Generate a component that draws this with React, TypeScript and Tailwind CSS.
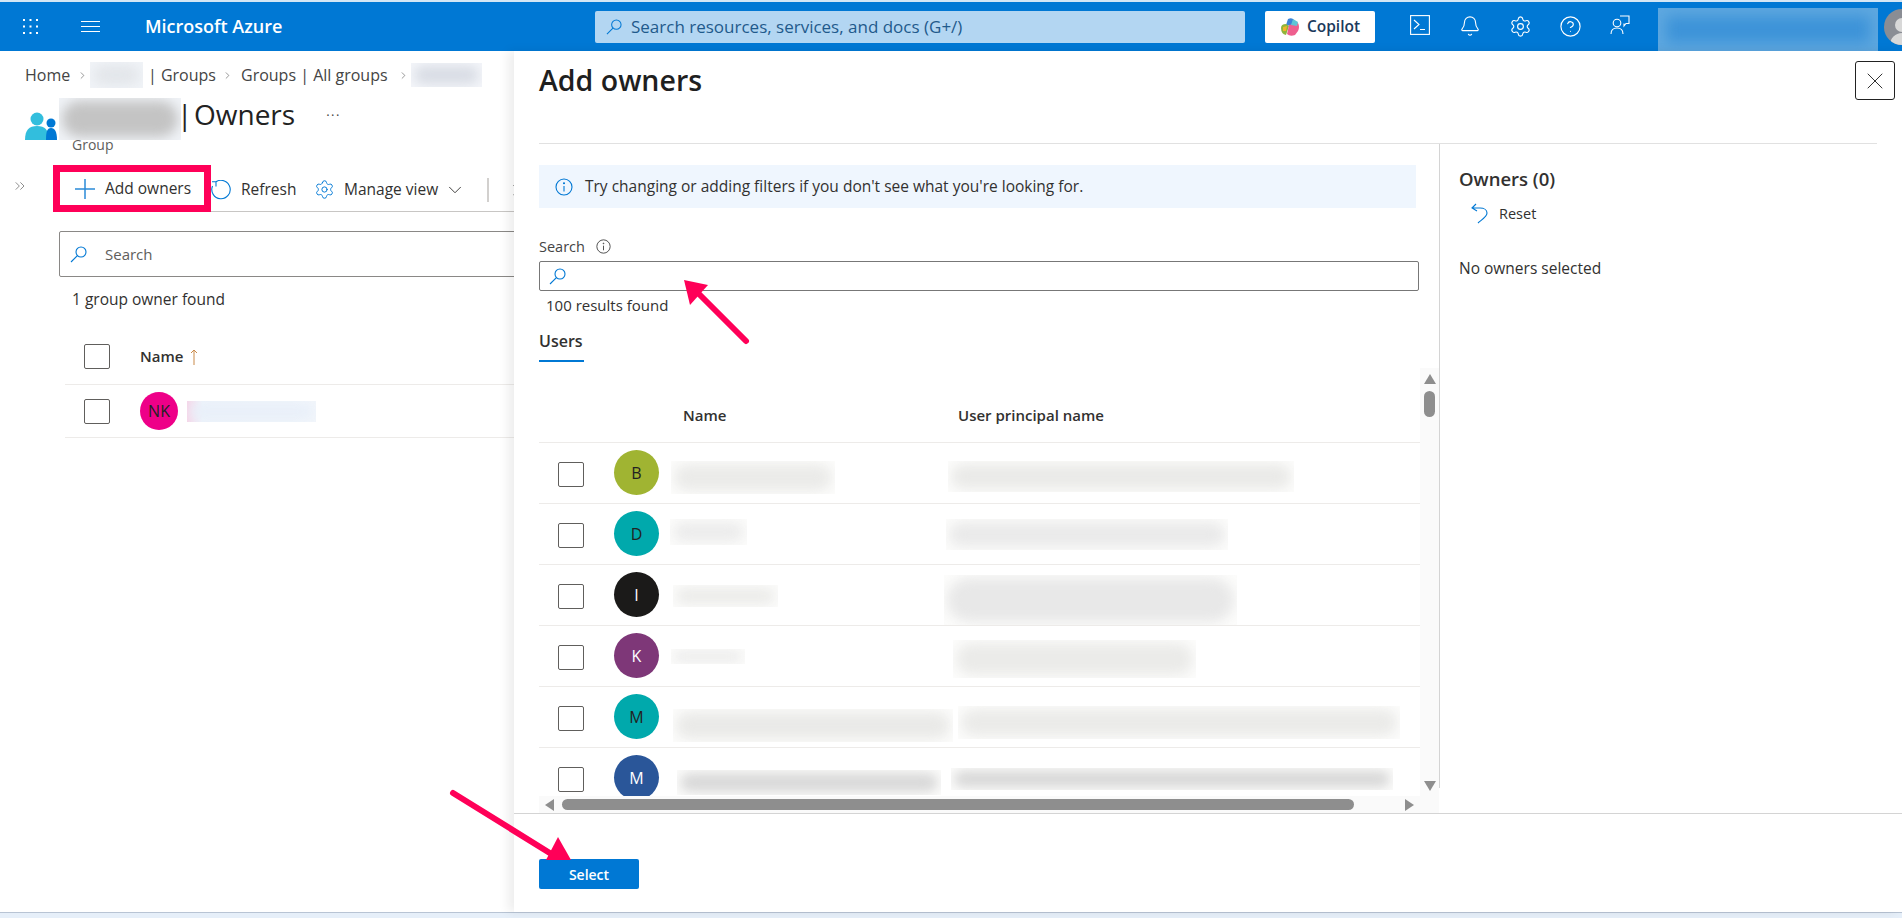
import { Bell, ChevronDown, ChevronRight, ChevronsRight, CircleHelp, Settings, X } from "lucide-react";

const font = "font-['Open_Sans',sans-serif]";

interface UserRow {
    letter: string;
    avatar: string;
    name: string;
    upn: string;
    nameInner: string;
    upnInner: string;
}

const rows: UserRow[] = [
    { letter: "B", avatar: "bg-[#a0b432] text-[#222]", name: "ml-[2px] mt-[18px] h-[33px] w-[164px]", upn: "ml-[4px] mt-[18px] h-[31px] w-[346px]", nameInner: "bg-[#ebebe9]", upnInner: "bg-[#eaeae8]" },
    { letter: "D", avatar: "bg-[#00a9ac] text-[#222]", name: "ml-[1px] mt-[15px] h-[26px] w-[77px]", upn: "ml-[2px] mt-[15px] h-[31px] w-[282px]", nameInner: "bg-[#ececec]", upnInner: "bg-[#eaeaea]" },
    { letter: "I", avatar: "bg-[#1b1a19] text-white", name: "ml-[4px] mt-[20px] h-[22px] w-[105px]", upn: "mt-[10px] h-[50px] w-[293px]", nameInner: "bg-[#ebebe9]", upnInner: "bg-[#e8e8e8]" },
    { letter: "K", avatar: "bg-[#7e3778] text-white", name: "ml-[2px] mt-[23px] h-[15px] w-[74px]", upn: "ml-[9px] mt-[14px] h-[38px] w-[243px]", nameInner: "bg-[#e8e8e8]", upnInner: "bg-[#ebebe9]" },
    { letter: "M", avatar: "bg-[#00a9ac] text-[#222]", name: "ml-[4px] mt-[22px] h-[33px] w-[280px]", upn: "ml-[14px] mt-[19px] h-[33px] w-[442px]", nameInner: "bg-[#eaeae8]", upnInner: "bg-[#ebebe9]" },
    { letter: "M", avatar: "bg-[#2a5699] text-white", name: "ml-[8px] mt-[22px] h-[25px] w-[264px]", upn: "ml-[7px] mt-[20px] h-[22px] w-[442px]", nameInner: "bg-[#d8d8d8]", upnInner: "bg-[#d6d6d6]" },
];

function Blur({ className, inner, bg = "bg-[#fcfcfb]" }: { className: string; inner: string; bg?: string }) {
    return (
        <div className={`overflow-hidden shrink-0 ${bg} ${className}`}>
            <div className="h-full w-full p-[3px]">
                <div className={`h-full w-full rounded-full blur-[6px] ${inner}`} />
            </div>
        </div>
    );
}

function Checkbox() {
    return <div className="w-[26px] h-[25px] rounded-[2px] border border-[#605e5c] bg-white shrink-0" />;
}

function Magnifier({ className }: { className: string }) {
    return (
        <svg viewBox="0 0 17 17" fill="none" stroke="#0078d4" strokeWidth="1.1" className={className}>
            <circle cx="11" cy="6" r="5" />
            <path d="M7.4 9.6 1 16" />
        </svg>
    );
}

function InfoIcon({ className, color }: { className: string; color: string }) {
    return (
        <svg viewBox="0 0 18 18" fill="none" stroke={color} strokeWidth="1.1" className={className}>
            <circle cx="9" cy="9" r="8" />
            <path d="M9 8v5.5" />
            <circle cx="9" cy="5.3" r="0.5" fill={color} />
        </svg>
    );
}

function TopBar() {
    return (
        <div className="h-[51px] bg-[#0078d4] border-t-2 border-[#d3e6f5] flex items-center shrink-0">
            <svg viewBox="0 0 15 15" fill="#fff" className="ml-[23px] w-[15px] h-[15px] shrink-0">
                <rect x="0" y="0" width="2" height="2" /><rect x="6.5" y="0" width="2" height="2" /><rect x="13" y="0" width="2" height="2" />
                <rect x="0" y="6.5" width="2" height="2" /><rect x="6.5" y="6.5" width="2" height="2" /><rect x="13" y="6.5" width="2" height="2" />
                <rect x="0" y="13" width="2" height="2" /><rect x="6.5" y="13" width="2" height="2" /><rect x="13" y="13" width="2" height="2" />
            </svg>
            <div className="ml-[43px] w-[19px] flex flex-col gap-[4px] shrink-0">
                <div className="h-[1px] bg-white" />
                <div className="h-[1px] bg-white" />
                <div className="h-[1px] bg-white" />
            </div>
            <div className="ml-[45px] w-[450px] text-white font-semibold text-[18px] shrink-0">Microsoft Azure</div>
            <div className="w-[650px] h-[32px] rounded-[2px] bg-[#b3d6f2] flex items-center pl-[11px] gap-[9px] text-[#1f5a8c] text-[17px] shrink-0">
                <Magnifier className="w-[16px] h-[16px]" />
                Search resources, services, and docs (G+/)
            </div>
            <div className="ml-[20px] w-[110px] h-[32px] rounded-[2px] bg-white flex items-center justify-center gap-[7px] text-[#1b3a5c] font-semibold text-[15.5px] shrink-0">
                <svg viewBox="0 0 20 20" className="w-[20px] h-[20px]">
                    <path d="M8 2 Q12 0 14 3 L11 9 L6 8 Z" fill="#3c83d8" />
                    <path d="M1 11 Q1 7 6 7 L9 9 L6 18 Q1 17 1 11 Z" fill="#8fb53c" />
                    <path d="M9 8 L18 6 Q20 10 18 14 L15 18 Q10 20 7 17 Z" fill="#ee5f8e" />
                    <path d="M13 2 L18 5 L17 9 L11 8 Z" fill="#5ec6d6" />
                    <path d="M3 10 L7 9 L6 14 L3 14 Z" fill="#f0b429" />
                </svg>
                Copilot
            </div>
            <div className="ml-[20px] flex text-white shrink-0">
                <div className="w-[50px] flex justify-center">
                    <svg viewBox="0 0 20 20" fill="none" stroke="#fff" strokeWidth="1.1" className="w-[20px] h-[20px]">
                        <rect x="0.6" y="0.6" width="18.8" height="18.8" />
                        <path d="M4 5 9 9.5 4 14M10 14.5h5" />
                    </svg>
                </div>
                <div className="w-[50px] flex justify-center"><Bell size={22} strokeWidth={1.2} /></div>
                <div className="w-[50px] flex justify-center"><Settings size={23} strokeWidth={1.2} /></div>
                <div className="w-[50px] flex justify-center"><CircleHelp size={23} strokeWidth={1.2} /></div>
                <div className="w-[50px] flex justify-center">
                    <svg viewBox="0 0 20 20" fill="none" stroke="#fff" strokeWidth="1.1" className="w-[20px] h-[20px]">
                        <circle cx="7" cy="8" r="3.8" />
                        <path d="M1 19c0-4 2.5-6 6-6s6 2 6 6M10 1h9v7.5h-3l-2 2.5V8.5" />
                    </svg>
                </div>
            </div>
            <div className="ml-[13px] w-[220px] h-[43px] mt-[6px] bg-[#5ea8e0] overflow-hidden shrink-0">
                <div className="h-full w-full p-[8px]">
                    <div className="h-full w-full blur-[7px] bg-[#3d93d8]" />
                </div>
            </div>
            <div className="w-[36px] h-[36px] ml-[6px] rounded-full bg-[#8a8d94] flex flex-col items-center justify-end overflow-hidden shrink-0">
                <div className="w-[14px] h-[14px] rounded-full bg-[#d8d8d8] mb-[1px]" />
                <div className="w-[24px] h-[12px] rounded-t-full bg-[#d8d8d8]" />
            </div>
        </div>
    );
}

function Blade() {
    return (
        <div className="h-full overflow-hidden text-[#323130]">
            <div className="mt-[11px] h-[26px] pl-[25px] flex items-center text-[16px] text-[#444] w-[520px] whitespace-nowrap">
                <span className="w-[47px]">Home</span>
                <ChevronRight size={11} strokeWidth={1.2} className="ml-[5px] shrink-0" />
                <Blur className="ml-[2px] w-[53px] h-[26px]" bg="bg-[#f1f4f8]" inner="bg-[#e3e6ea]" />
                <span className="ml-[5px] w-[65px]">| Groups</span>
                <ChevronRight size={11} strokeWidth={1.2} className="ml-[9px] shrink-0" />
                <span className="ml-[8px] w-[148px]">Groups | All groups</span>
                <ChevronRight size={11} strokeWidth={1.2} className="ml-[9px] shrink-0" />
                <Blur className="ml-[2px] w-[71px] h-[24px]" bg="bg-[#f4f6fa]" inner="bg-[#d8dce4]" />
            </div>
            <div className="mt-[10px] h-[37px] flex items-start">
                <svg viewBox="0 0 33 28" className="ml-[25px] mt-[14px] w-[33px] h-[28px] shrink-0">
                    <circle cx="12" cy="7" r="6.5" fill="#32bedd" />
                    <path d="M0 28c0-10 4-14 12-14s12 4 12 14Z" fill="#32bedd" />
                    <circle cx="26" cy="11" r="4.5" fill="#0078d4" />
                    <path d="M21 28c0-8 1-12 5-12s6 4 6 12Z" fill="#0078d4" />
                </svg>
                <Blur className="ml-[1px] w-[122px] h-[42px]" bg="bg-[#f0f3f7]" inner="bg-[#c4c4c4]" />
                <span className="-ml-[4px] -mt-[2px] w-[17px] text-[28px] leading-[36px] text-[#222]">|</span>
                <span className="-mt-[2px] text-[28px] leading-[36px] text-[#222]">Owners</span>
                <span className="ml-[31px] mt-[10px] text-[13px] leading-[14px] tracking-[1.5px] text-[#444]">···</span>
            </div>
            <div className="h-[20px] pl-[72px] pt-[1px] text-[14px] leading-[18px] text-[#605e5c]">Group</div>
            <div className="mt-[10px] flex">
                <ChevronsRight size={16} strokeWidth={1} className="ml-[12px] mt-[13px] -mr-[1px] text-[#555] shrink-0" />
                <div className="ml-[38px] w-[700px] h-[47px] border-b border-[#c8c6c4] flex items-center text-[15.5px]">
                    <div className="-ml-[12px] w-[158px] h-[47px] border-[7px] border-[#ff0058] bg-white flex items-center pl-[15px] pt-[2px] gap-[10px] shrink-0">
                        <svg viewBox="0 0 20 20" stroke="#2b8bd8" strokeWidth="1.5" className="w-[20px] h-[20px] shrink-0">
                            <path d="M10 0v20M0 10h20" />
                        </svg>
                        <span className="whitespace-nowrap">Add owners</span>
                    </div>
                    <div className="flex items-center mt-[3px]">
                        <svg viewBox="0 0 20 20" fill="none" stroke="#0078d4" strokeWidth="1.1" className="w-[20px] h-[20px] shrink-0">
                            <path d="M5 1.8A9.2 9.2 0 1 1 1.5 6M5 1.8V6.5M5 1.8H1" />
                        </svg>
                        <span className="ml-[10px] w-[53px]">Refresh</span>
                        <Settings size={21} strokeWidth={1.1} className="ml-[20px] text-[#0078d4] shrink-0" />
                        <span className="ml-[9px] w-[94px] whitespace-nowrap">Manage view</span>
                        <ChevronDown size={22} strokeWidth={1} className="ml-[6px] shrink-0" />
                        <div className="ml-[21px] w-[2px] h-[24px] bg-[#d2d0ce] shrink-0" />
                        <ChevronRight size={18} strokeWidth={1} className="ml-[18px] shrink-0" />
                    </div>
                </div>
            </div>
            <div className="ml-[59px] mt-[19px] w-[700px] h-[46px] rounded-[2px] border border-[#8a8886] flex items-center pl-[10px] text-[15px] text-[#605e5c]">
                <Magnifier className="w-[17px] h-[17px]" />
                <span className="ml-[18px]">Search</span>
            </div>
            <div className="ml-[72px] mt-[11px] h-[22px] leading-[22px] text-[15.5px]">1 group owner found</div>
            <div className="ml-[65px] mt-[16px] w-[700px] h-[59px] border-b border-[#edebe9] flex items-start">
                <div className="ml-[19px] mt-[18px]"><Checkbox /></div>
                <span className="ml-[30px] mt-[18px] font-semibold text-[15px] leading-[24px]">Name</span>
                <svg viewBox="0 0 8 16" fill="none" stroke="#c98a4a" strokeWidth="1" className="ml-[7px] mt-[23px] w-[8px] h-[16px]">
                    <path d="M4 16V1M1 4l3-3 3 3" />
                </svg>
            </div>
            <div className="ml-[65px] w-[700px] h-[53px] border-b border-[#edebe9] flex items-center">
                <div className="ml-[19px]"><Checkbox /></div>
                <div className="ml-[30px] w-[38px] h-[38px] rounded-full bg-[#ee0088] text-[#222] text-[16px] font-medium flex items-center justify-center shrink-0">NK</div>
                <Blur className="ml-[9px] w-[129px] h-[21px]" bg="bg-[linear-gradient(90deg,#f6d5e8,#eef4fb_12%,#f2f6fb)]" inner="bg-[#e8eff9]" />
            </div>
        </div>
    );
}

function OwnersTable() {
    return (
        <div className="h-[428px] overflow-hidden flex">
            <div className="w-[881px] shrink-0">
                <div className="h-[75px] border-b border-[#edebe9] flex items-start text-[15px] font-semibold text-[#323130]">
                    <span className="ml-[144px] mt-[36px] w-[275px]">Name</span>
                    <span className="mt-[36px]">User principal name</span>
                </div>
                {rows.map((row, i) => (
                    <div key={i} className="h-[61px] border-b border-[#edebe9] flex items-start">
                        <div className="ml-[19px] mt-[19px]"><Checkbox /></div>
                        <div className={`ml-[30px] mt-[7px] w-[45px] h-[45px] rounded-full flex items-center justify-center text-[16px] shrink-0 ${row.avatar}`}>
                            {row.letter}
                        </div>
                        <div className="ml-[10px] w-[275px] shrink-0">
                            <Blur className={row.name} inner={row.nameInner} />
                        </div>
                        <div className="shrink-0">
                            <Blur className={row.upn} inner={row.upnInner} />
                        </div>
                    </div>
                ))}
            </div>
            <div className="w-[19px] h-[428px] bg-[#fafafa] flex flex-col items-center shrink-0">
                <svg viewBox="0 0 12 10" fill="#8e8e8e" className="mt-[6px] w-[12px] h-[10px]"><path d="M6 0 12 10H0Z" /></svg>
                <div className="mt-[7px] w-[11px] h-[26px] rounded-full bg-[#8e8e8e]" />
                <div className="flex-1" />
                <svg viewBox="0 0 12 10" fill="#8e8e8e" className="mb-[5px] w-[12px] h-[10px]"><path d="M0 0H12L6 10Z" /></svg>
            </div>
        </div>
    );
}

function AddOwnersPanel() {
    return (
        <div className="absolute left-[514px] right-0 top-0 bottom-0 bg-white shadow-[-6px_0_10px_rgba(0,0,0,0.07)] flex flex-col text-[#323130]">
            <div className="h-[93px] ml-[25px] mr-[25px] border-b border-[#e1e1e1] relative shrink-0">
                <div className="pt-[10px] text-[28.5px] leading-[38px] font-semibold text-[#1f1f1f]">Add owners</div>
                <div className="absolute -right-[18px] top-[10px] w-[40px] h-[39px] rounded-[3px] border border-[#222] bg-white flex items-center justify-center">
                    <X size={28} strokeWidth={0.8} className="text-[#222]" />
                </div>
            </div>
            <div className="h-[670px] flex shrink-0 border-b border-[#d4d4d4]">
                <div className="ml-[25px] w-[900px] shrink-0">
                    <div className="mt-[21px] w-[877px] h-[43px] bg-[#eff6fe] flex items-center pl-[16px] pt-[1px] gap-[12px] text-[15.5px]">
                        <InfoIcon className="w-[18px] h-[18px] shrink-0" color="#0078d4" />
                        Try changing or adding filters if you don&apos;t see what you&apos;re looking for.
                    </div>
                    <div className="mt-[28px] pt-[1px] h-[20px] flex items-center gap-[11px] text-[14.5px] text-[#444]">
                        Search
                        <InfoIcon className="w-[15px] h-[15px]" color="#444" />
                    </div>
                    <div className="mt-[5px] w-[880px] h-[30px] rounded-[2px] border border-[#777] flex items-center pl-[9px]">
                        <Magnifier className="w-[17px] h-[17px]" />
                    </div>
                    <div className="mt-[3px] ml-[7px] h-[22px] leading-[22px] text-[15px]">100 results found</div>
                    <div className="mt-[14px] w-[45px] h-[32px] border-b-2 border-[#0078d4] text-[16px] font-semibold leading-[22px] whitespace-nowrap">Users</div>
                    <div className="mt-[6px]"><OwnersTable /></div>
                    <div className="h-[17px] bg-[#fafafa] flex items-center pl-[6px] w-[900px]">
                        <svg viewBox="0 0 9 12" fill="#8e8e8e" className="w-[9px] h-[12px] shrink-0"><path d="M9 0V12L0 6Z" /></svg>
                        <div className="ml-[8px] w-[792px] h-[11px] rounded-full bg-[#8e8e8e] shrink-0" />
                        <svg viewBox="0 0 9 12" fill="#8e8e8e" className="ml-[51px] w-[9px] h-[12px] shrink-0"><path d="M0 0V12L9 6Z" /></svg>
                    </div>
                </div>
                <div className="w-px h-[644px] bg-[#d4d4d4] shrink-0" />
                <div className="pl-[19px] pt-[23px]">
                    <div className="text-[18.5px] leading-[24px] font-semibold whitespace-nowrap">Owners (0)</div>
                    <div className="ml-[12px] mt-[12px] flex items-center gap-[11px] text-[14.5px]">
                        <svg viewBox="0 0 17 21" fill="none" stroke="#0078d4" strokeWidth="1.1" className="w-[17px] h-[21px]">
                            <path d="M5 1 1 5l5 3M1 5h8c4 0 7 2 7 5 0 4-6 7-9 10" />
                        </svg>
                        Reset
                    </div>
                    <div className="mt-[33px] text-[15.5px] leading-[20px] whitespace-nowrap">No owners selected</div>
                </div>
            </div>
            <div className="ml-[25px] mt-[45px] w-[100px] h-[30px] rounded-[2px] bg-[#0078d4] text-white text-[14px] font-semibold flex items-center justify-center shrink-0">
                Select
            </div>
        </div>
    );
}

export default function App() {
    return (
        <div className={`relative w-[1902px] h-[918px] bg-white overflow-hidden flex flex-col ${font}`}>
            <TopBar />
            <div className="relative h-[861px] shrink-0">
                <Blade />
                <AddOwnersPanel />
            </div>
            <div className="h-[6px] bg-[#e6eff9] border-t border-[#b8c4d4] shrink-0" />
            <svg viewBox="0 0 1902 918" className="absolute inset-0 w-[1902px] h-[918px] pointer-events-none">
                <path d="M746 341 695 290" stroke="#ff0058" strokeWidth="6" strokeLinecap="round" />
                <path d="M684 280 708 285 690 305Z" fill="#ff0058" />
                <path d="M453 793 553 855" stroke="#ff0058" strokeWidth="6" strokeLinecap="round" />
                <path d="M558 837 571 860 546 860Z" fill="#ff0058" />
            </svg>
        </div>
    );
}
